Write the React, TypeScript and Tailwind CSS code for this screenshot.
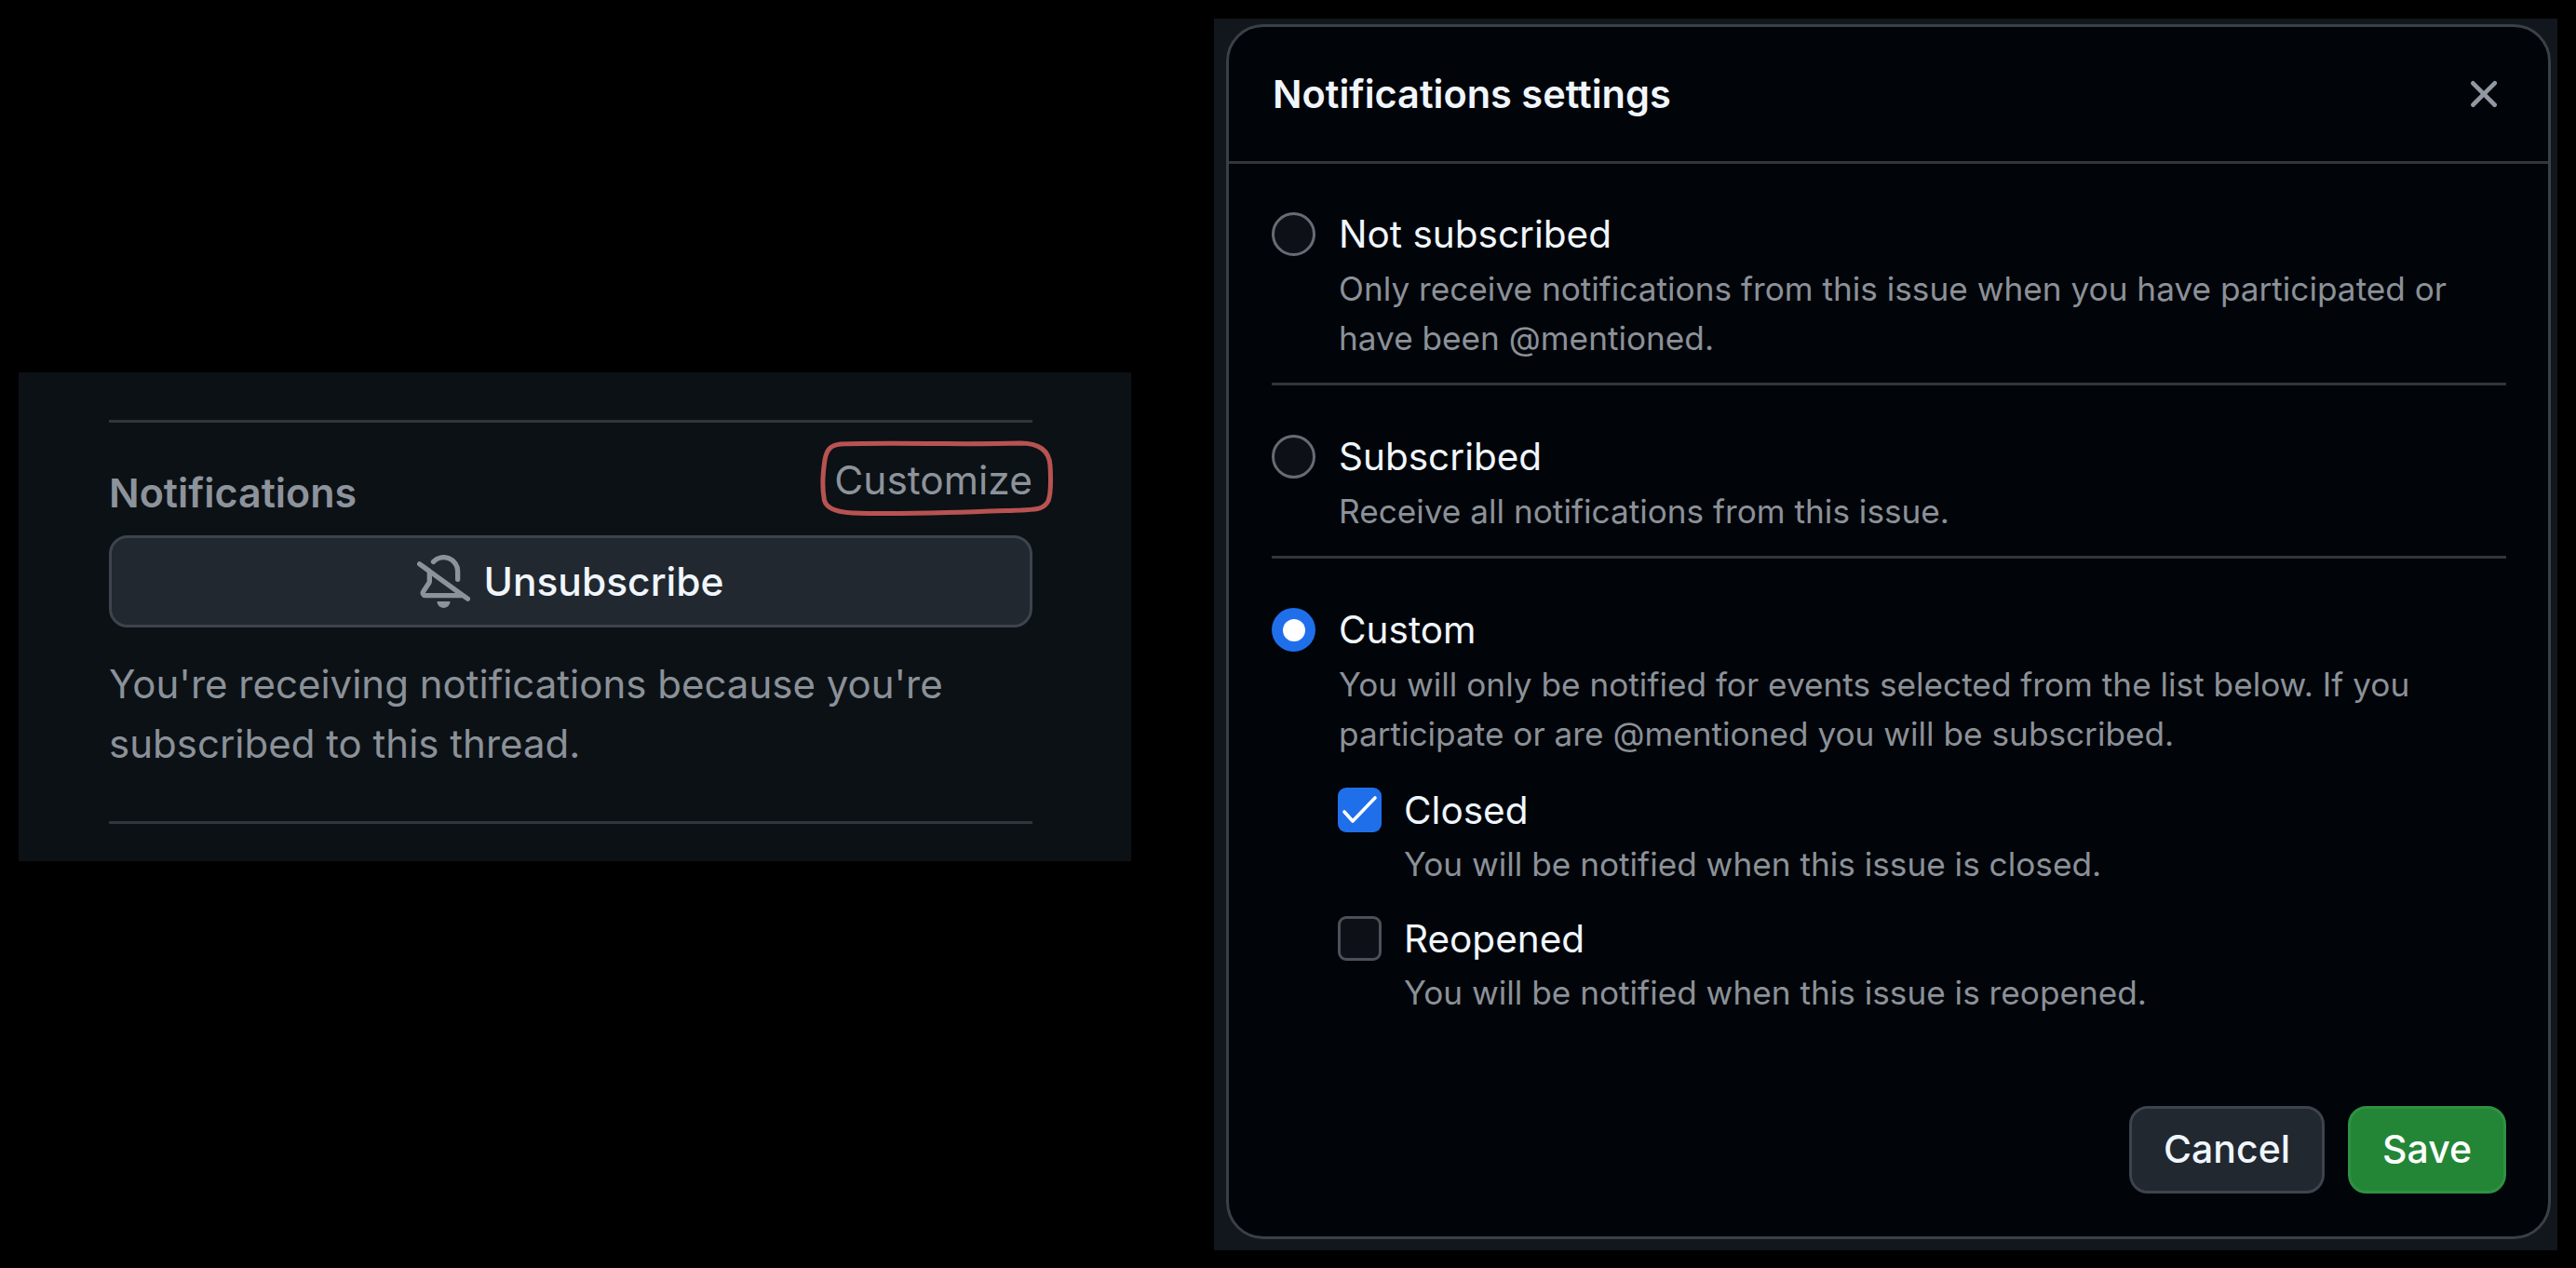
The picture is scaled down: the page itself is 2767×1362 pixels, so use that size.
const font = "font-['Inter','Noto_Sans',sans-serif]";

function Radio({ checked }: { checked?: boolean }) {
  if (checked) {
    return (
      <span className="flex h-[47px] w-[47px] shrink-0 items-center justify-center rounded-full bg-[#1f6feb]">
        <span className="h-[24px] w-[24px] rounded-full bg-white" />
      </span>
    );
  }
  return <span className="h-[47px] w-[47px] shrink-0 rounded-full border-[3px] border-[#666c75] bg-[#0d1117]" />;
}

function Check({ checked }: { checked?: boolean }) {
  if (checked) {
    return (
      <span className="flex h-[48px] w-[47px] shrink-0 items-center justify-center rounded-[9px] bg-[#1f6feb]">
        <svg width="47" height="48" viewBox="0 0 47 48" fill="none">
          <path d="M7 26 L16 36 L40 11" stroke="#ffffff" strokeWidth="3.6" strokeLinecap="round" strokeLinejoin="round" />
        </svg>
      </span>
    );
  }
  return <span className="h-[48px] w-[47px] shrink-0 rounded-[9px] border-[3px] border-[#4b5159] bg-[#0d1117]" />;
}

function Option({ label, lines, checked }: { label: string; lines: string[]; checked?: boolean }) {
  return (
    <div className="flex items-start gap-[25px]">
      <Radio checked={checked} />
      <div className="-mt-[2px]">
        <div className="text-[40.5px] leading-[52px] text-[#f0f6fc]">{label}</div>
        <div className="mt-[6px] text-[35.2px] leading-[53px] text-[#8b9198]">
          {lines.map((l) => (
            <div key={l}>{l}</div>
          ))}
        </div>
      </div>
    </div>
  );
}

function Event({ label, desc, checked }: { label: string; desc: string; checked?: boolean }) {
  return (
    <div className="flex items-start gap-[24px]">
      <Check checked={checked} />
      <div>
        <div className="text-[40.5px] leading-[50px] text-[#f0f6fc]">{label}</div>
        <div className="mt-[6px] text-[35.2px] leading-[53px] text-[#8b9198]">{desc}</div>
      </div>
    </div>
  );
}

function NotificationsPanel() {
  return (
    <div className="mt-[400px] ml-[20px] h-[525px] w-[1195px] shrink-0 bg-[#0c1116] pt-[51px] pr-[106px] pl-[97px]">
      <div className="h-[3px] bg-[#30363d]" />
      <div className="relative mt-[22px] flex h-[99px] items-center justify-between">
        <span className="mt-[8px] text-[43px] font-semibold text-[#8d939b]">Notifications</span>
        <span className="-mt-[20px] text-[42.5px] text-[#8d939b]">Customize</span>
        {/* hand drawn marker round the link */}
        <svg className="absolute -top-[4px] left-[764px]" width="252" height="84" viewBox="0 0 252 84" fill="none">
          <path
            d="M22 5 C80 3 150 6 215 4 C235 4 246 12 247 28 C248 45 248 58 245 66 C240 76 230 75 215 76 C160 78 90 81 35 79 C15 78 4 73 4 62 C2 50 3 35 5 22 C7 10 12 6 22 5 Z"
            stroke="#b85351"
            strokeWidth="5"
          />
        </svg>
      </div>
      <button className="flex h-[99px] w-full items-center justify-center gap-[14px] rounded-[20px] border-[3px] border-[#3d444d] bg-[#212830] text-[42.5px] font-medium text-[#f0f6fc]">
        <svg width="57" height="57" viewBox="0 0 16 16" fill="#8d939b">
          <path d="m4.182 4.31.016.011 10.104 7.316.013.01 1.375.996a.75.75 0 1 1-.88 1.214L13.626 13H2.518a1.516 1.516 0 0 1-1.263-2.36l1.703-2.554A.255.255 0 0 0 3 7.947V5.305L.31 3.357a.75.75 0 1 1 .88-1.214Zm7.373 7.19L4.5 6.391v1.556c0 .346-.102.683-.294.97l-1.703 2.556a.017.017 0 0 0-.003.01c0 .005.002.009.005.012l.006.004.007.001ZM8 1.5c-.997 0-1.895.416-2.534 1.086A.75.75 0 1 1 4.38 1.55 5 5 0 0 1 13 5v2.373a.75.75 0 0 1-1.5 0V5A3.5 3.5 0 0 0 8 1.5ZM8 16a2 2 0 0 1-1.985-1.75c-.017-.137.097-.25.235-.25h3.5c.138 0 .252.113.235.25A2 2 0 0 1 8 16Z" />
        </svg>
        Unsubscribe
      </button>
      <p className="mt-[29px] text-[42px] leading-[64px] text-[#8b9198]">
        You're receiving notifications because you're
        <br />
        subscribed to this thread.
      </p>
      <div className="mt-[51px] h-[3px] bg-[#30363d]" />
    </div>
  );
}

function SettingsDialog() {
  return (
    <div className="mt-[20px] ml-[89px] h-[1323px] w-[1443px] shrink-0 bg-[#12161d] pt-[6px] pr-[7px] pb-[12px] pl-[13px]">
      <div className="flex h-full flex-col rounded-[40px] border-[3px] border-[#3a4048] bg-[#010409]">
        <div className="flex h-[147px] shrink-0 items-center justify-between border-b-[3px] border-[#30363d] pr-[44px] pl-[47px]">
          <span className="text-[41.5px] font-semibold text-[#f0f6fc]">Notifications settings</span>
          <svg width="50" height="50" viewBox="0 0 16 16" fill="#9198a1">
            <path d="M3.72 3.72a.75.75 0 0 1 1.06 0L8 6.94l3.22-3.22a.749.749 0 0 1 1.275.326.749.749 0 0 1-.215.734L9.06 8l3.22 3.22a.749.749 0 0 1-.326 1.275.749.749 0 0 1-.734-.215L8 9.06l-3.22 3.22a.751.751 0 0 1-1.042-.018.751.751 0 0 1-.018-1.042L6.94 8 3.72 4.78a.75.75 0 0 1 0-1.06Z" />
          </svg>
        </div>
        <div className="flex-1 pr-[45px] pl-[46px]">
          <div className="mt-[52px]">
            <Option
              label="Not subscribed"
              lines={[
                "Only receive notifications from this issue when you have participated or",
                "have been @mentioned.",
              ]}
            />
          </div>
          <div className="mt-[21px] h-[3px] bg-[#30363d]" />
          <div className="mt-[53px]">
            <Option label="Subscribed" lines={["Receive all notifications from this issue."]} />
          </div>
          <div className="mt-[21px] h-[3px] bg-[#30363d]" />
          <div className="mt-[53px]">
            <Option
              checked
              label="Custom"
              lines={[
                "You will only be notified for events selected from the list below. If you",
                "participate or are @mentioned you will be subscribed.",
              ]}
            />
          </div>
          <div className="mt-[31px] ml-[71px] flex flex-col gap-[29px]">
            <Event checked label="Closed" desc="You will be notified when this issue is closed." />
            <Event label="Reopened" desc="You will be notified when this issue is reopened." />
          </div>
        </div>
        <div className="flex justify-end gap-[25px] pr-[45px] pb-[46px]">
          <button className="flex h-[94px] w-[210px] items-center justify-center rounded-[20px] border-[3px] border-[#3d444d] bg-[#212830] text-[41px] font-medium text-[#f0f6fc]">
            Cancel
          </button>
          <button className="flex h-[94px] w-[170px] items-center justify-center rounded-[20px] border-[3px] border-[#2f9143] bg-[#238636] text-[41px] font-medium text-white">
            Save
          </button>
        </div>
      </div>
    </div>
  );
}

export default function App() {
  return (
    <div className={`flex h-[1362px] w-[2767px] items-start overflow-hidden bg-black ${font}`}>
      <NotificationsPanel />
      <SettingsDialog />
    </div>
  );
}
